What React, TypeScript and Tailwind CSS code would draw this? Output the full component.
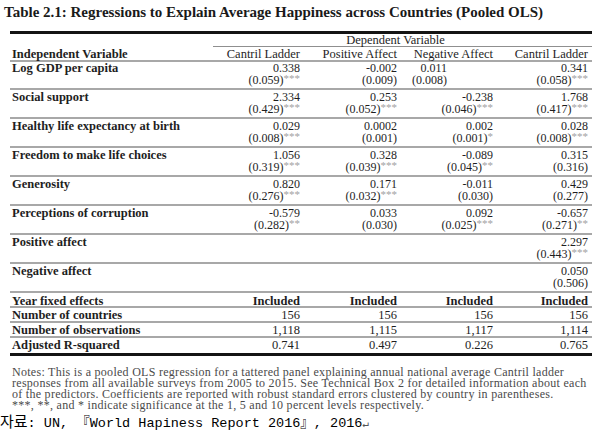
const serif = { fontFamily: '"Liberation Serif", "DejaVu Serif", serif' }

type Cell = { v: string; se: string; s?: string; pad?: boolean } | null

const rows: { label: string; cells: Cell[] }[] = [
  {
    label: 'Log GDP per capita',
    cells: [
      { v: '0.338', se: '0.059', s: '***' },
      { v: '-0.002', se: '0.009' },
      { v: '0.011', se: '0.008', pad: true },
      { v: '0.341', se: '0.058', s: '***' },
    ],
  },
  {
    label: 'Social support',
    cells: [
      { v: '2.334', se: '0.429', s: '***' },
      { v: '0.253', se: '0.052', s: '***' },
      { v: '-0.238', se: '0.046', s: '***' },
      { v: '1.768', se: '0.417', s: '***' },
    ],
  },
  {
    label: 'Healthy life expectancy at birth',
    cells: [
      { v: '0.029', se: '0.008', s: '***' },
      { v: '0.0002', se: '0.001' },
      { v: '0.002', se: '0.001', s: '*' },
      { v: '0.028', se: '0.008', s: '***' },
    ],
  },
  {
    label: 'Freedom to make life choices',
    cells: [
      { v: '1.056', se: '0.319', s: '***' },
      { v: '0.328', se: '0.039', s: '***' },
      { v: '-0.089', se: '0.045', s: '**' },
      { v: '0.315', se: '0.316' },
    ],
  },
  {
    label: 'Generosity',
    cells: [
      { v: '0.820', se: '0.276', s: '***' },
      { v: '0.171', se: '0.032', s: '***' },
      { v: '-0.011', se: '0.030' },
      { v: '0.429', se: '0.277' },
    ],
  },
  {
    label: 'Perceptions of corruption',
    cells: [
      { v: '-0.579', se: '0.282', s: '**' },
      { v: '0.033', se: '0.030' },
      { v: '0.092', se: '0.025', s: '***' },
      { v: '-0.657', se: '0.271', s: '**' },
    ],
  },
  {
    label: 'Positive affect',
    cells: [null, null, null, { v: '2.297', se: '0.443', s: '***' }],
  },
  {
    label: 'Negative affect',
    cells: [null, null, null, { v: '0.050', se: '0.506' }],
  },
]

const stats: { label: string; vals: string[]; bold?: boolean }[] = [
  { label: 'Year fixed effects', vals: ['Included', 'Included', 'Included', 'Included'], bold: true },
  { label: 'Number of countries', vals: ['156', '156', '156', '156'] },
  { label: 'Number of observations', vals: ['1,118', '1,115', '1,117', '1,114'] },
  { label: 'Adjusted R-squared', vals: ['0.741', '0.497', '0.226', '0.765'] },
]

const grid = 'grid grid-cols-[194px_96px_97px_96px_95px] pr-[4px]'

function Stars({ s }: { s?: string }) {
  if (!s) return null
  return <span className="relative -top-[2px] text-[11px] leading-[11px] text-[#a2a2a2]">{s}</span>
}

export default function App() {
  return (
    <div className="w-[600px] h-[441px] bg-white text-[#1e1e1e] overflow-hidden" style={serif}>
      <div className="pt-[3px] pl-[4px] text-[15px] font-bold leading-[18px] text-[#1a1a1a] whitespace-nowrap">
        Table 2.1: Regressions to Explain Average Happiness across Countries (Pooled OLS)
      </div>

      <div className="ml-[10px] w-[582px] mt-[10px]">
        <div className="h-[3px] bg-[#141414]" />

        <div className="flex h-[13px]">
          <div className="w-[203px]" />
          <div className="flex-1 border-b border-[#8f8f8f] text-center pr-[14px] text-[12.5px] leading-[13px]">
            Dependent Variable
          </div>
        </div>

        <div className={`${grid} h-[15px] border-b-2 border-[#a8a8a8] text-[12.5px] leading-[14px]`}>
          <div className="pl-[2px] font-bold">Independent Variable</div>
          <div className="text-right">Cantril Ladder</div>
          <div className="text-right">Positive Affect</div>
          <div className="text-right">Negative Affect</div>
          <div className="text-right">Cantril Ladder</div>
        </div>

        {rows.map((r, idx) => (
          <div
            key={r.label}
            className={`${grid} ${idx === 0 ? 'h-[28px]' : 'h-[29px] pt-px'} border-b-2 border-[#a8a8a8] text-[12px] leading-[12px]`}
          >
            <div className="pl-[2px] font-bold text-[12.5px]">{r.label}</div>
            {r.cells.map((c, i) => (
              <div key={i} className={`text-right ${c?.pad ? 'pr-[46px]' : ''}`}>
                {c && (
                  <>
                    <div>{c.v}</div>
                    <div>
                      ({c.se})<Stars s={c.s} />
                    </div>
                  </>
                )}
              </div>
            ))}
          </div>
        ))}

        {stats.map((r, idx) => (
          <div
            key={r.label}
            className={`${grid} h-[15px] text-[12.5px] leading-[14px] ${idx === 0 ? 'pt-px' : ''} ${idx < stats.length - 1 ? 'border-b-2 border-[#a8a8a8]' : ''}`}
          >
            <div className="pl-[2px] font-bold">{r.label}</div>
            {r.vals.map((v, i) => (
              <div key={i} className={`text-right ${r.bold ? 'font-bold' : ''}`}>
                {v}
              </div>
            ))}
          </div>
        ))}

        <div className="h-[3px] bg-[#141414]" />
      </div>

      <div className="ml-[12px] mt-[11px] w-[585px] text-[12px] leading-[11px] tracking-[0.28px] text-[#4a4a4a] whitespace-nowrap">
        <div>Notes: This is a pooled OLS regression for a tattered panel explaining annual national average Cantril ladder</div>
        <div>responses from all available surveys from 2005 to 2015. See Technical Box 2 for detailed information about each</div>
        <div>of the predictors. Coefficients are reported with robust standard errors clustered by country in parentheses.</div>
        <div>***, **, and * indicate significance at the 1, 5 and 10 percent levels respectively.</div>
      </div>

      <div
        className="mt-[4px] text-[13.5px] leading-[18px] text-black whitespace-nowrap"
        style={{ fontFamily: '"Liberation Mono", "Noto Sans CJK KR", monospace' }}
      >
        <span className="text-[15px]">자료</span>: UN, 『World Hapiness Report 2016』, 2016
        <span className="text-[11px] text-[#555]">↵</span>
      </div>
    </div>
  )
}
